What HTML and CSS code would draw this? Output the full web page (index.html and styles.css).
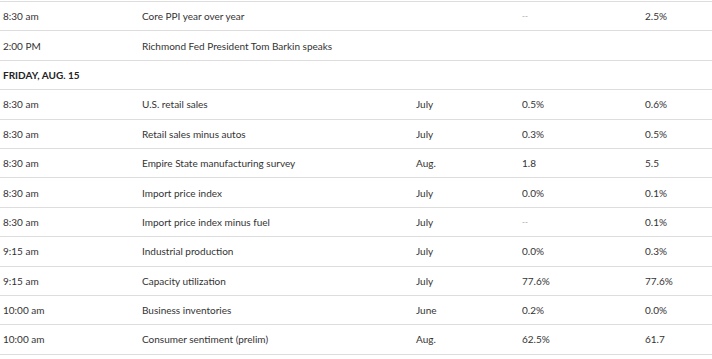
FILE: index.html
```html
<!DOCTYPE html>
<html lang="en">
<head>
  <meta charset="UTF-8" />
  <title>Economic calendar</title>
  <link rel="stylesheet" href="styles.css">
</head>
<body>

<table class="agenda">
  <colgroup>
    <col class="c-hora">
    <col class="c-evento">
    <col class="c-periodo">
    <col class="c-valor">
    <col class="c-anterior">
  </colgroup>
  <tr>
    <td>8:30 am</td>
    <td>Core PPI year over year</td>
    <td></td>
    <td class="vazio">--</td>
    <td>2.5%</td>
  </tr>
  <tr>
    <td>2:00 PM</td>
    <td>Richmond Fed President Tom Barkin speaks</td>
    <td></td>
    <td></td>
    <td></td>
  </tr>
  <tr class="dia">
    <td colspan="5">FRIDAY, AUG. 15</td>
  </tr>
  <tr>
    <td>8:30 am</td>
    <td>U.S. retail sales</td>
    <td>July</td>
    <td>0.5%</td>
    <td>0.6%</td>
  </tr>
  <tr>
    <td>8:30 am</td>
    <td>Retail sales minus autos</td>
    <td>July</td>
    <td>0.3%</td>
    <td>0.5%</td>
  </tr>
  <tr>
    <td>8:30 am</td>
    <td>Empire State manufacturing survey</td>
    <td>Aug.</td>
    <td>1.8</td>
    <td>5.5</td>
  </tr>
  <tr>
    <td>8:30 am</td>
    <td>Import price index</td>
    <td>July</td>
    <td>0.0%</td>
    <td>0.1%</td>
  </tr>
  <tr>
    <td>8:30 am</td>
    <td>Import price index minus fuel</td>
    <td>July</td>
    <td class="vazio">--</td>
    <td>0.1%</td>
  </tr>
  <tr>
    <td>9:15 am</td>
    <td>Industrial production</td>
    <td>July</td>
    <td>0.0%</td>
    <td>0.3%</td>
  </tr>
  <tr>
    <td>9:15 am</td>
    <td>Capacity utilization</td>
    <td>July</td>
    <td>77.6%</td>
    <td>77.6%</td>
  </tr>
  <tr>
    <td>10:00 am</td>
    <td>Business inventories</td>
    <td>June</td>
    <td>0.2%</td>
    <td>0.0%</td>
  </tr>
  <tr>
    <td>10:00 am</td>
    <td>Consumer sentiment (prelim)</td>
    <td>Aug.</td>
    <td>62.5%</td>
    <td>61.7</td>
  </tr>
</table>

</body>
</html>
```

FILE: styles.css
```css
body {
  margin: 0;
  background-color: #fff;
  color: #333;
  font-family: Lato, "Open Sans", sans-serif;
  font-size: 10px;
  overflow: hidden;
}
.agenda {
  width: 712px;
  margin-top: 1px;
  border-collapse: collapse;
  table-layout: fixed;
}
.c-hora { width: 139px; }
.c-evento { width: 274px; }
.c-periodo { width: 106px; }
.c-valor { width: 123px; }
.c-anterior { width: 70px; }
.agenda td {
  height: 28.4px;
  padding: 0 0 0 3px;
  border-top: 1px solid #ddd;
  border-bottom: 1px solid #ddd;
  white-space: nowrap;
  vertical-align: middle;
}
.agenda .vazio {
  color: #999;
  font-size: 8px;
}
.dia td {
  font-weight: bold;
  color: #222;
}
```
